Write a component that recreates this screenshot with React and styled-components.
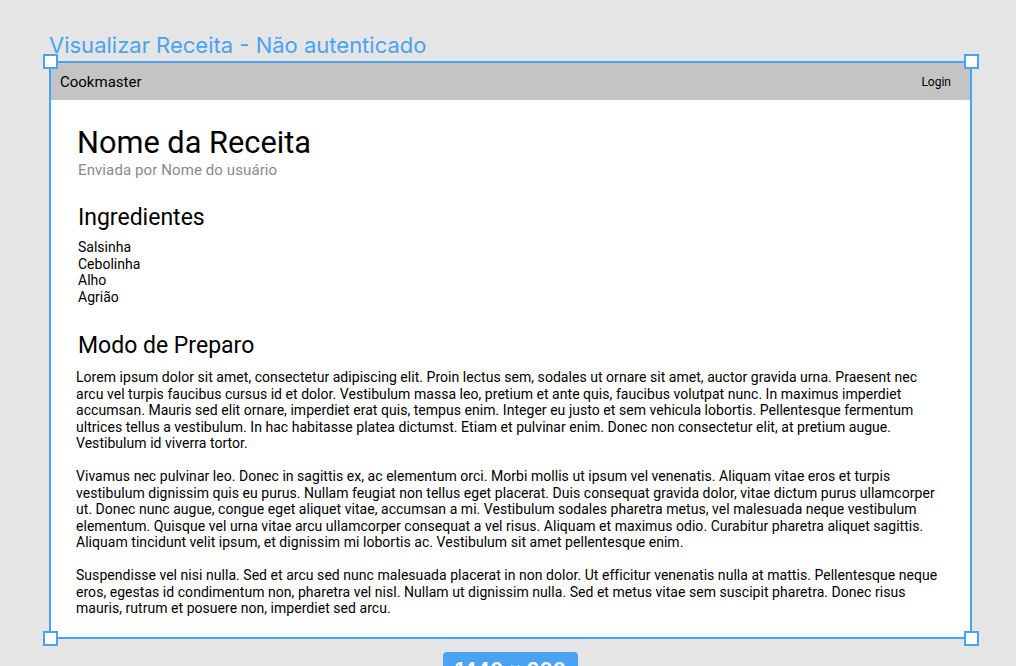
import React from "react";
import styled, { createGlobalStyle } from "styled-components";

const GlobalStyle = createGlobalStyle`
    html, body {
        margin: 0;
        padding: 0;
        background: #e5e5e5;
        font-family: Roboto, "Liberation Sans", sans-serif;
        overflow: hidden;
    }
`;

const BLUE = "#4aa3f2";

const Canvas = styled.div`
    width: 1016px;
    height: 666px;
    padding: 33px 0 0 49px;
    box-sizing: border-box;
`;

const FrameLabel = styled.div`
    color: ${BLUE};
    font-family: Inter, Roboto, sans-serif;
    font-size: 22px;
    line-height: 25px;
    margin-bottom: 3px;
    white-space: nowrap;
`;

const Frame = styled.div`
    position: relative;
    width: 923px;
    height: 578px;
    box-sizing: border-box;
    border: 2px solid ${BLUE};
    background: #fff;
    display: flex;
    flex-direction: column;
`;

const Handle = styled.span`
    position: absolute;
    width: 15px;
    height: 15px;
    box-sizing: border-box;
    background: #fff;
    border: 2px solid ${BLUE};
    ${({ $v }) => ($v === "top" ? "top: -9px;" : "bottom: -9px;")}
    ${({ $h }) => ($h === "left" ? "left: -8px;" : "right: -9px;")}
`;

const NavBar = styled.div`
    height: 37px;
    flex-shrink: 0;
    background: #c4c4c4;
    display: flex;
    align-items: center;
    justify-content: space-between;
    padding: 0 19px 0 9px;
`;

const Brand = styled.span`
    font-size: 15px;
    color: #000;
`;

const NavLink = styled.span`
    font-size: 12px;
    color: #000;
`;

const Content = styled.div`
    flex: 1;
    overflow: hidden;
    padding: 24px 24px 0 25px;
    color: #000;
`;

const Title = styled.h1`
    margin: 0 0 0 1px;
    font-size: 30.75px;
    font-weight: 400;
    line-height: normal;
`;

const Author = styled.div`
    margin: 0 0 0 2px;
    font-size: 15px;
    letter-spacing: 0.1px;
    color: #8a8a8a;
`;

const SectionTitle = styled.h2`
    margin: ${({ $gap }) => $gap}px 0 0 2px;
    font-size: 23px;
    font-weight: 400;
    line-height: normal;
`;

const Ingredients = styled.ul`
    list-style: none;
    margin: 8px 0 0 2px;
    padding: 0;
    font-size: 14px;
    line-height: 16.5px;
`;

const Steps = styled.div`
    margin-top: 10px;
    width: 868px;
    font-size: 14px;
    letter-spacing: 0.04px;
    line-height: 16.5px;

    p {
        margin: 0 0 16.5px;
    }
`;

const SizeBadge = styled.div`
    margin: 13px 0 0 394px;
    width: 135px;
    height: 30px;
    border-radius: 4px;
    background: ${BLUE};
    color: #fff;
    font-family: Inter, Roboto, sans-serif;
    font-size: 20px;
    font-weight: 600;
    text-align: center;
    padding-top: 6px;
    box-sizing: border-box;
`;

const ingredients = ["Salsinha", "Cebolinha", "Alho", "Agrião"];

const steps = [
    "Lorem ipsum dolor sit amet, consectetur adipiscing elit. Proin lectus sem, sodales ut ornare sit amet, auctor gravida urna. Praesent nec arcu vel turpis faucibus cursus id et dolor. Vestibulum massa leo, pretium et ante quis, faucibus volutpat nunc. In maximus imperdiet accumsan. Mauris sed elit ornare, imperdiet erat quis, tempus enim. Integer eu justo et sem vehicula lobortis. Pellentesque fermentum ultrices tellus a vestibulum. In hac habitasse platea dictumst. Etiam et pulvinar enim. Donec non consectetur elit, at pretium augue. Vestibulum id viverra tortor.",
    "Vivamus nec pulvinar leo. Donec in sagittis ex, ac elementum orci. Morbi mollis ut ipsum vel venenatis. Aliquam vitae eros et turpis vestibulum dignissim quis eu purus. Nullam feugiat non tellus eget placerat. Duis consequat gravida dolor, vitae dictum purus ullamcorper ut. Donec nunc augue, congue eget aliquet vitae, accumsan a mi. Vestibulum sodales pharetra metus, vel malesuada neque vestibulum elementum. Quisque vel urna vitae arcu ullamcorper consequat a vel risus. Aliquam et maximus odio. Curabitur pharetra aliquet sagittis. Aliquam tincidunt velit ipsum, et dignissim mi lobortis ac. Vestibulum sit amet pellentesque enim.",
    "Suspendisse vel nisi nulla. Sed et arcu sed nunc malesuada placerat in non dolor. Ut efficitur venenatis nulla at mattis. Pellentesque neque eros, egestas id condimentum non, pharetra vel nisl. Nullam ut dignissim nulla. Sed et metus vitae sem suscipit pharetra. Donec risus mauris, rutrum et posuere non, imperdiet sed arcu."
];

export default function App() {
    return (
        <Canvas>
            <GlobalStyle />
            <FrameLabel>Visualizar Receita - Não autenticado</FrameLabel>
            <Frame>
                <NavBar>
                    <Brand>Cookmaster</Brand>
                    <NavLink>Login</NavLink>
                </NavBar>
                <Content>
                    <Title>Nome da Receita</Title>
                    <Author>Enviada por Nome do usuário</Author>
                    <SectionTitle $gap={25}>Ingredientes</SectionTitle>
                    <Ingredients>
                        {ingredients.map(item => (
                            <li key={item}>{item}</li>
                        ))}
                    </Ingredients>
                    <SectionTitle $gap={27}>Modo de Preparo</SectionTitle>
                    <Steps>
                        {steps.map((text, i) => (
                            <p key={i}>{text}</p>
                        ))}
                    </Steps>
                </Content>
                <Handle $v="top" $h="left" />
                <Handle $v="top" $h="right" />
                <Handle $v="bottom" $h="left" />
                <Handle $v="bottom" $h="right" />
            </Frame>
            <SizeBadge>1440 x 900</SizeBadge>
        </Canvas>
    );
}
